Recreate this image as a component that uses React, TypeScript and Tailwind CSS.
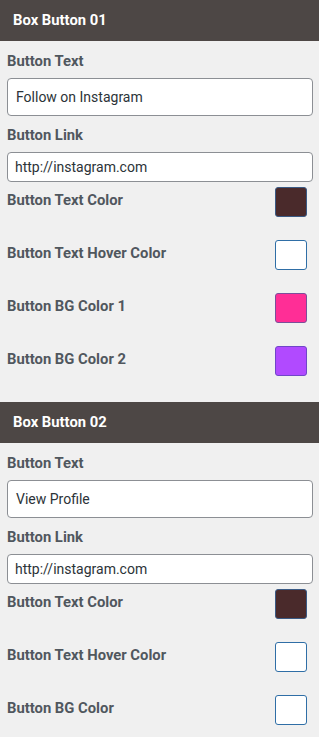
import React from "react";

const font = { fontFamily: "Roboto, 'Noto Sans', sans-serif" };

function Swatch({ color, border }: { color: string; border: string }) {
  return (
    <div
      className="w-[32px] h-[30px] rounded-[3px] border shrink-0"
      style={{ backgroundColor: color, borderColor: border }}
    />
  );
}

function ColorRow({ label, color, border }: { label: string; color: string; border: string }) {
  return (
    <div className="flex items-start justify-between pr-[6px]">
      <div className="mt-[3px] text-[14.8px] leading-[20px] font-bold text-[#50575e]">{label}</div>
      <Swatch color={color} border={border} />
    </div>
  );
}

function Section({
  title,
  text,
  colors,
}: {
  title: string;
  text: string;
  colors: { label: string; color: string; border: string }[];
}) {
  return (
    <div>
      <div className="h-[41px] bg-[#4d4745] flex items-center px-[13px] text-white text-[14.8px] font-bold">
        {title}
      </div>
      <div className="pl-[7px] pr-[6px]">
        <div className="mt-[10px] text-[14.8px] leading-[20px] font-bold text-[#50575e]">Button Text</div>
        <div className="mt-[7px] h-[38px] bg-white border border-[#8c8f94] rounded-[4px] flex items-center px-[8px] text-[14px] text-[#2c3338]">
          {text}
        </div>
        <div className="mt-[9px] text-[14.8px] leading-[20px] font-bold text-[#50575e]">Button Link</div>
        <div className="mt-[7px] h-[30px] bg-white border border-[#8c8f94] rounded-[4px] flex items-center px-[7px] text-[14px] text-[#2c3338]">
          http://instagram.com
        </div>
        <div className="mt-[5px] flex flex-col gap-[23px]">
          {colors.map((c) => (
            <ColorRow key={c.label} {...c} />
          ))}
        </div>
      </div>
    </div>
  );
}

export default function App() {
  return (
    <div className="w-[319px] min-h-[737px] bg-[#f0f0f0]" style={font}>
      <Section
        title="Box Button 01"
        text="Follow on Instagram"
        colors={[
          { label: "Button Text Color", color: "#4a2a2b", border: "#3a5a85" },
          { label: "Button Text Hover Color", color: "#ffffff", border: "#2f6ea6" },
          { label: "Button BG Color 1", color: "#ff2e96", border: "#7a4f9a" },
          { label: "Button BG Color 2", color: "#b14aff", border: "#7046c8" },
        ]}
      />
      <div className="h-[26px]" />
      <Section
        title="Box Button 02"
        text="View Profile"
        colors={[
          { label: "Button Text Color", color: "#4a2a2b", border: "#3a5a85" },
          { label: "Button Text Hover Color", color: "#ffffff", border: "#2f6ea6" },
          { label: "Button BG Color", color: "#ffffff", border: "#2f6ea6" },
        ]}
      />
    </div>
  );
}
